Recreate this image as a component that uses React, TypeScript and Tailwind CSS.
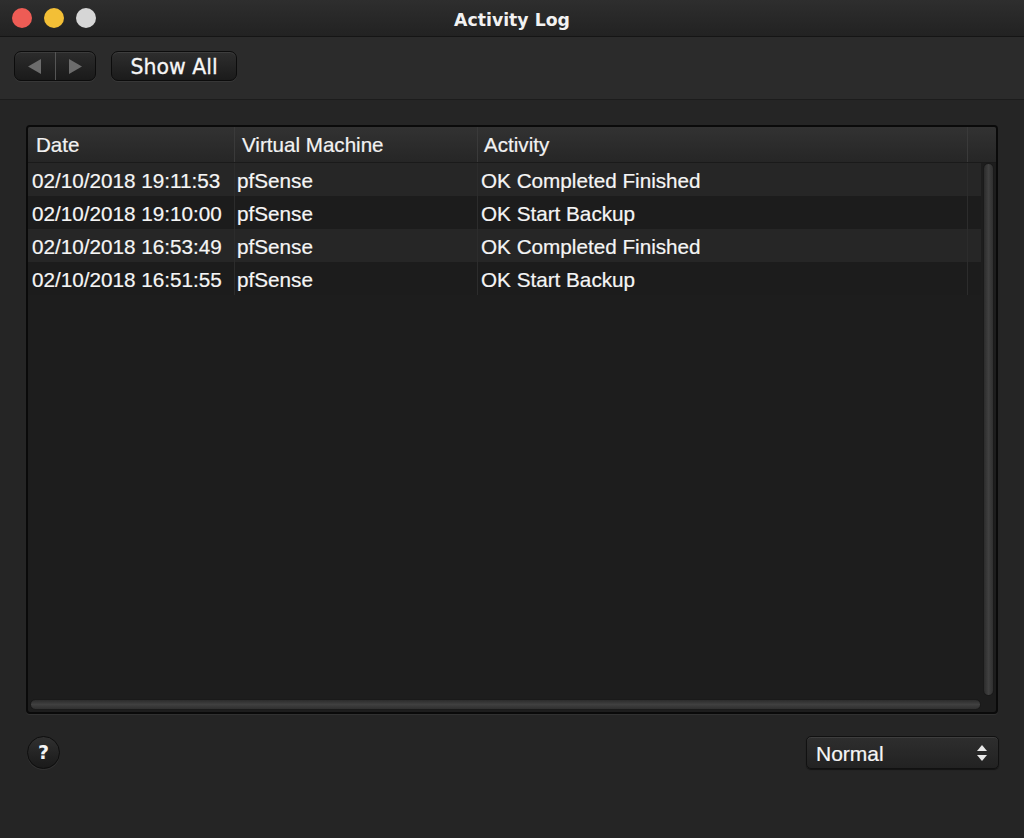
import React from "react";

const rows = [
  { date: "02/10/2018 19:11:53", vm: "pfSense", activity: "OK Completed Finished" },
  { date: "02/10/2018 19:10:00", vm: "pfSense", activity: "OK Start Backup" },
  { date: "02/10/2018 16:53:49", vm: "pfSense", activity: "OK Completed Finished" },
  { date: "02/10/2018 16:51:55", vm: "pfSense", activity: "OK Start Backup" },
];

export default function App() {
  return (
    <div
      className="w-[1024px] h-[838px] flex flex-col bg-[#252525] text-white overflow-hidden"
      style={{ fontFamily: '"Liberation Sans", Arial, sans-serif' }}
    >
      {/* Title bar */}
      <div className="h-[37px] grid grid-cols-[1fr_auto_1fr] items-center bg-gradient-to-b from-[#2e2e2e] to-[#222222] border-b border-[#151515]">
        <div className="flex items-center gap-[12px] pl-[12px]">
          <span className="w-[20px] h-[20px] rounded-full bg-[#ee5c55]" />
          <span className="w-[20px] h-[20px] rounded-full bg-[#f3bf36]" />
          <span className="w-[20px] h-[20px] rounded-full bg-[#d6d6d6]" />
        </div>
        <div
          className="pt-[6px] text-[17.3px] font-bold text-[#f2f2f2]"
          style={{ fontFamily: '"DejaVu Sans", sans-serif' }}
        >
          Activity Log
        </div>
        <div />
      </div>

      {/* Toolbar */}
      <div className="h-[63px] flex items-start gap-[15px] pl-[14px] pt-[14px] bg-[#2b2b2b] border-b border-[#1c1c1c]">
        <div className="w-[82px] h-[30px] flex rounded-[7px] border border-[#0c0c0c] bg-gradient-to-b from-[#2c2c2c] to-[#1a1a1a] shadow-[inset_0_1px_0_rgba(255,255,255,0.08),0_1px_0_rgba(255,255,255,0.06)]">
          <div className="flex-1 flex items-center justify-center border-r border-[#555]">
            <svg width="15" height="17" viewBox="0 0 15 17">
              <path d="M14 1 L1 8.5 L14 16 Z" fill="#6c6c6c" />
            </svg>
          </div>
          <div className="flex-1 flex items-center justify-center">
            <svg width="15" height="17" viewBox="0 0 15 17">
              <path d="M1 1 L14 8.5 L1 16 Z" fill="#6c6c6c" />
            </svg>
          </div>
        </div>
        <div
          className="w-[126px] h-[30px] flex items-center justify-center pt-[3px] rounded-[7px] border border-[#0c0c0c] bg-gradient-to-b from-[#2e2e2e] to-[#1b1b1b] shadow-[inset_0_1px_0_rgba(255,255,255,0.08),0_1px_0_rgba(255,255,255,0.06)] text-[20.5px] text-[#f6f6f6]"
          style={{ fontFamily: '"DejaVu Sans", sans-serif', WebkitTextStroke: "0.3px #f6f6f6" }}
        >
          Show All
        </div>
      </div>

      {/* Main */}
      <div className="flex-1 flex flex-col px-[26px] pt-[25px]">
        <div
          className="h-[589px] flex flex-col rounded-[4px] border-2 border-[#0a0a0a] bg-[#1d1d1d] shadow-[0_1px_0_rgba(255,255,255,0.06)] overflow-hidden"
          style={{ WebkitTextStroke: "0.2px #f4f4f4" }}
        >
          {/* Header */}
          <div className="h-[36px] flex text-[20.6px] text-[#f2f2f2] bg-gradient-to-b from-[#323232] to-[#262626] border-b border-[#1a1a1a]">
            <div className="w-[207px] flex items-center pl-[8px] pt-[2px] border-r border-[#3a3a3a]">Date</div>
            <div className="w-[243px] flex items-center pl-[7px] pt-[2px] border-r border-[#3a3a3a]">Virtual Machine</div>
            <div className="w-[490px] flex items-center pl-[6px] pt-[2px] border-r border-[#3a3a3a]">Activity</div>
            <div className="flex-1" />
          </div>

          {/* Body */}
          <div className="flex-1 flex">
            <div className="flex-1 flex flex-col">
              {rows.map((r, i) => (
                <div
                  key={i}
                  className={`h-[33px] flex text-[20.7px] text-[#f6f6f6] ${
                    i % 2 === 0 ? "bg-[#262626]" : "bg-[#1c1c1c]"
                  }`}
                >
                  <div className="w-[207px] flex items-center pl-[4px] pt-[2px] border-r border-[#2c2c2c]">{r.date}</div>
                  <div className="w-[243px] flex items-center pl-[2px] pt-[2px] border-r border-[#2c2c2c]">{r.vm}</div>
                  <div className="w-[490px] flex items-center pl-[3px] pt-[2px] border-r border-[#2c2c2c]">{r.activity}</div>
                  <div className="flex-1" />
                </div>
              ))}
              <div className="flex-1" />
            </div>
            {/* Vertical scrollbar */}
            <div className="w-[15px] flex justify-center pb-[2px]">
              <div className="w-[11px] h-full rounded-full bg-gradient-to-r from-[#2c2c2c] via-[#404040] to-[#303030] border border-[#1a1a1a]" />
            </div>
          </div>

          {/* Horizontal scrollbar */}
          <div className="h-[14px] flex items-center pl-[2px] pr-[15px] pb-[1px]">
            <div className="flex-1 h-[11px] rounded-full bg-gradient-to-b from-[#2c2c2c] via-[#404040] to-[#303030] border border-[#1a1a1a]" />
          </div>
        </div>

        {/* Bottom controls */}
        <div className="flex items-center justify-between pt-[22px] pl-[1px]">
          <div
            className="w-[33px] h-[33px] rounded-full flex items-center justify-center bg-gradient-to-b from-[#303030] to-[#1a1a1a] border border-[#0e0e0e] shadow-[0_1px_0_rgba(255,255,255,0.06)] text-[19px] font-bold text-[#f4f4f4]"
            style={{ fontFamily: '"DejaVu Sans", sans-serif' }}
          >
            ?
          </div>
          <div
            className="w-[193px] h-[33px] mr-[-1px] flex items-center justify-between pl-[9px] pr-[10px] rounded-[5px] bg-gradient-to-b from-[#2e2e2e] to-[#222222] border border-[#111] shadow-[inset_0_1px_0_rgba(255,255,255,0.08),0_1px_1px_rgba(0,0,0,0.5)] text-[21px] text-[#f6f6f6]"
            style={{ WebkitTextStroke: "0.2px #f6f6f6" }}
          >
            <span className="pt-[2px]">Normal</span>
            <svg width="12" height="20" viewBox="0 0 12 20">
              <path d="M6 2 L11 8 L1 8 Z" fill="#e8e8e8" />
              <path d="M1 12 L11 12 L6 18 Z" fill="#e8e8e8" />
            </svg>
          </div>
        </div>
      </div>
    </div>
  );
}
